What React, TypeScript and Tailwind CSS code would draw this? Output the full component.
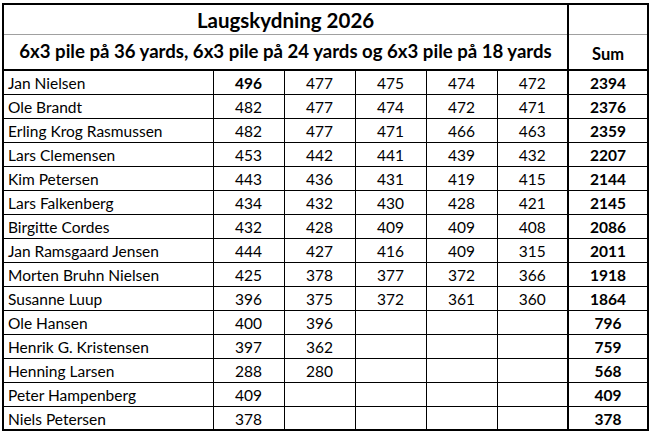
import React from "react";

type Row = { name: string; scores: (number | null)[]; sum: number; bold?: number };

const rows: Row[] = [
  { name: "Jan Nielsen", scores: [496, 477, 475, 474, 472], sum: 2394, bold: 0 },
  { name: "Ole Brandt", scores: [482, 477, 474, 472, 471], sum: 2376 },
  { name: "Erling Krog Rasmussen", scores: [482, 477, 471, 466, 463], sum: 2359 },
  { name: "Lars Clemensen", scores: [453, 442, 441, 439, 432], sum: 2207 },
  { name: "Kim Petersen", scores: [443, 436, 431, 419, 415], sum: 2144 },
  { name: "Lars Falkenberg", scores: [434, 432, 430, 428, 421], sum: 2145 },
  { name: "Birgitte Cordes", scores: [432, 428, 409, 409, 408], sum: 2086 },
  { name: "Jan Ramsgaard Jensen", scores: [444, 427, 416, 409, 315], sum: 2011 },
  { name: "Morten Bruhn Nielsen", scores: [425, 378, 377, 372, 366], sum: 1918 },
  { name: "Susanne Luup", scores: [396, 375, 372, 361, 360], sum: 1864 },
  { name: "Ole Hansen", scores: [400, 396, null, null, null], sum: 796 },
  { name: "Henrik G. Kristensen", scores: [397, 362, null, null, null], sum: 759 },
  { name: "Henning Larsen", scores: [288, 280, null, null, null], sum: 568 },
  { name: "Peter Hampenberg", scores: [409, null, null, null, null], sum: 409 },
  { name: "Niels Petersen", scores: [378, null, null, null, null], sum: 378 },
];

export default function App() {
  return (
    <div
      className="w-[651px] h-[437px] bg-white pl-[2px] pt-[3px] text-black"
      style={{ fontFamily: "Lato, 'Open Sans', sans-serif" }}
    >
      <table className="table-fixed border-collapse border-2 border-black w-[645px]">
        <colgroup>
          <col className="w-[210px]" />
          <col className="w-[71px]" />
          <col className="w-[71px]" />
          <col className="w-[71px]" />
          <col className="w-[71px]" />
          <col className="w-[71px]" />
          <col className="w-[80px]" />
        </colgroup>
        <thead>
          <tr className="h-[30px]">
            <th colSpan={6} className="border-b border-[#a0a0a0] text-center text-[20.5px] font-bold leading-none pt-[2px]">
              Laugskydning 2026
            </th>
            <th className="border-l-2 border-b border-l-black border-b-[#a0a0a0]" />
          </tr>
          <tr className="h-[36px] border-b-2 border-black">
            <th colSpan={6} className="text-center text-[18.6px] font-bold leading-none whitespace-nowrap">
              6x3 pile på 36 yards, 6x3 pile på 24 yards og 6x3 pile på 18 yards
            </th>
            <th className="border-l-2 border-black text-center text-[16.5px] font-bold leading-none pt-[4px]">Sum</th>
          </tr>
        </thead>
        <tbody>
          {rows.map((r) => (
            <tr key={r.name} className="h-[24px] text-[15.5px] leading-none">
              <td className="border border-black pl-[4px] pt-[3px] whitespace-nowrap">{r.name}</td>
              {r.scores.map((s, i) => (
                <td
                  key={i}
                  className={`border border-black text-center pt-[3px] ${r.bold === i ? "font-bold" : ""}`}
                >
                  {s ?? ""}
                </td>
              ))}
              <td className="border border-black border-l-2 text-center font-bold pt-[3px]">{r.sum}</td>
            </tr>
          ))}
        </tbody>
      </table>
    </div>
  );
}
